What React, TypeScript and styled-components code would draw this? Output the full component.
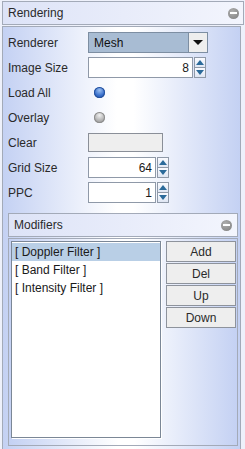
import React from "react";
import styled, { createGlobalStyle } from "styled-components";

const Global = createGlobalStyle`
  html, body { margin: 0; padding: 0; background: #eef1fb; }
  body { font-family: "Liberation Sans", Arial, sans-serif; font-size: 12px; color: #2a2a2a; }
  #root { width: 245px; height: 449px; overflow: hidden; }
`;

const Root = styled.div`
  padding: 1px 1px 0 2px;
  height: 449px;
  box-sizing: border-box;
  display: flex;
  flex-direction: column;
`;

const Header = styled.div<{ $inner?: boolean }>`
  height: 22px;
  box-sizing: content-box;
  border: 1px solid #a3aab8;
  background: linear-gradient(to right, #dde3f7, #f3f5fd);
  display: flex;
  align-items: center;
  justify-content: space-between;
  padding: 0 ${(p) => (p.$inner ? "5px" : "4px")} 0 5px;
  font-size: 12px;
  color: #2a2a2a;
`;

const CollapseIcon = styled.span`
  width: 11px;
  height: 11px;
  border-radius: 50%;
  background: radial-gradient(circle at 40% 35%, #b0b0b0, #7c7c7c);
  position: relative;
  &::after {
    content: "";
    position: absolute;
    left: 2px;
    right: 2px;
    top: 4.5px;
    height: 2px;
    background: #fff;
  }
`;

const Body = styled.div`
  margin-top: 1px;
  border: 1px solid #a3aab8;
  border-bottom: none;
  margin-right: 3px;
  flex: 1;
  background: linear-gradient(to right, #c4d1f3 0%, #ffffff 48%, #ffffff 55%, #c4d1f3 100%);
  padding: 5px 2px 3px 5px;
  display: flex;
  flex-direction: column;
`;

const Form = styled.div`
  display: grid;
  grid-template-columns: 80px 1fr;
  grid-auto-rows: 21px;
  row-gap: 4px;
  align-items: center;
`;

const Label = styled.span`
  font-size: 12px;
  color: #2a2a2a;
`;

const Combo = styled.div`
  width: 120px;
  height: 21px;
  box-sizing: border-box;
  border: 1px solid #7d8ea2;
  display: flex;
  background: #a8bcd3;
`;

const ComboText = styled.span`
  flex: 1;
  padding-left: 5px;
  display: flex;
  align-items: center;
  font-size: 12px;
  color: #111;
`;

const ComboArrow = styled.span`
  width: 18px;
  border-left: 1px solid #7d8ea2;
  background: #eeeeee;
  display: flex;
  align-items: center;
  justify-content: center;
  &::after {
    content: "";
    border-left: 5px solid transparent;
    border-right: 5px solid transparent;
    border-top: 5px solid #111;
  }
`;

const SpinnerWrap = styled.div`
  display: flex;
  height: 21px;
  align-items: center;
`;

const Field = styled.div<{ $w: number }>`
  width: ${(p) => p.$w}px;
  height: 21px;
  box-sizing: border-box;
  border: 1px solid #8f99a8;
  background: #fff;
  display: flex;
  align-items: center;
  justify-content: flex-end;
  padding-right: 3px;
  font-size: 12px;
  color: #1a1a1a;
`;

const Arrows = styled.div`
  width: 12px;
  height: 21px;
  display: flex;
  flex-direction: column;
  margin-left: 1px;
`;

const ArrowBtn = styled.span<{ $down?: boolean }>`
  flex: 1;
  border: 1px solid #8f99a8;
  background: linear-gradient(#fafbff, #dfe6f3);
  display: flex;
  align-items: center;
  justify-content: center;
  margin-top: ${(p) => (p.$down ? "-1px" : "0")};
  &::after {
    content: "";
    border-left: 4px solid transparent;
    border-right: 4px solid transparent;
    ${(p) =>
      p.$down ? "border-top: 5px solid #2b6a9a;" : "border-bottom: 5px solid #2b6a9a;"}
  }
`;

const Radio = styled.span<{ $on?: boolean }>`
  width: 11px;
  height: 11px;
  margin-left: 6px;
  border-radius: 50%;
  background: ${(p) =>
    p.$on
      ? "radial-gradient(circle at 50% 30%, #9cc0f0, #3a70cc 55%, #1d4a99)"
      : "radial-gradient(circle at 50% 30%, #f0f0f0, #b4b4b4 55%, #8a8a8a)"};
  box-shadow: inset 0 0 0 1px ${(p) => (p.$on ? "#24509c" : "#8d8d8d")};
`;

const ColorBox = styled.div`
  width: 75px;
  height: 19px;
  box-sizing: border-box;
  border: 1px solid #8a8f98;
  background: #eeeeee;
`;

const SubPanel = styled.div`
  margin-top: 10px;
  flex: 1;
  display: flex;
  flex-direction: column;
`;

const SubBody = styled.div`
  margin-top: 1px;
  border: 1px solid #a3aab8;
  flex: 1;
  background: linear-gradient(to right, #c4d1f3 0%, #ffffff 48%, #ffffff 55%, #c4d1f3 100%);
  padding: 2px 1px 7px 2px;
  display: flex;
  gap: 5px;
`;

const List = styled.div`
  width: 150px;
  box-sizing: border-box;
  border: 1px solid #7b8796;
  box-shadow: 1px 1px 0 #fff;
  background: #fff;
  padding-top: 1px;
`;

const Item = styled.div<{ $sel?: boolean }>`
  height: 18px;
  display: flex;
  align-items: center;
  padding-left: 3px;
  background: ${(p) => (p.$sel ? "#b9cfe6" : "transparent")};
  font-size: 12px;
  color: #1a1a1a;
`;

const Buttons = styled.div`
  display: flex;
  flex-direction: column;
  gap: 1px;
  width: 70px;
`;

const Button = styled.div`
  height: 21px;
  box-sizing: border-box;
  border: 1px solid #8e939c;
  background: #eeeeee;
  display: flex;
  align-items: center;
  justify-content: center;
  font-size: 12px;
  color: #2a2a2a;
`;

export default function App() {
  return (
    <>
      <Global />
      <Root>
        <Header>
          <span>Rendering</span>
          <CollapseIcon />
        </Header>
        <Body>
          <Form>
            <Label>Renderer</Label>
            <Combo>
              <ComboText>Mesh</ComboText>
              <ComboArrow />
            </Combo>
            <Label>Image Size</Label>
            <SpinnerWrap>
              <Field $w={105}>8</Field>
              <Arrows>
                <ArrowBtn />
                <ArrowBtn $down />
              </Arrows>
            </SpinnerWrap>
            <Label>Load All</Label>
            <Radio $on />
            <Label>Overlay</Label>
            <Radio />
            <Label>Clear</Label>
            <ColorBox />
            <Label>Grid Size</Label>
            <SpinnerWrap>
              <Field $w={68}>64</Field>
              <Arrows>
                <ArrowBtn />
                <ArrowBtn $down />
              </Arrows>
            </SpinnerWrap>
            <Label>PPC</Label>
            <SpinnerWrap>
              <Field $w={68}>1</Field>
              <Arrows>
                <ArrowBtn />
                <ArrowBtn $down />
              </Arrows>
            </SpinnerWrap>
          </Form>
          <SubPanel>
            <Header $inner>
              <span>Modifiers</span>
              <CollapseIcon />
            </Header>
            <SubBody>
              <List>
                <Item $sel>[ Doppler Filter ]</Item>
                <Item>[ Band Filter ]</Item>
                <Item>[ Intensity Filter ]</Item>
              </List>
              <Buttons>
                <Button>Add</Button>
                <Button>Del</Button>
                <Button>Up</Button>
                <Button>Down</Button>
              </Buttons>
            </SubBody>
          </SubPanel>
        </Body>
      </Root>
    </>
  );
}
